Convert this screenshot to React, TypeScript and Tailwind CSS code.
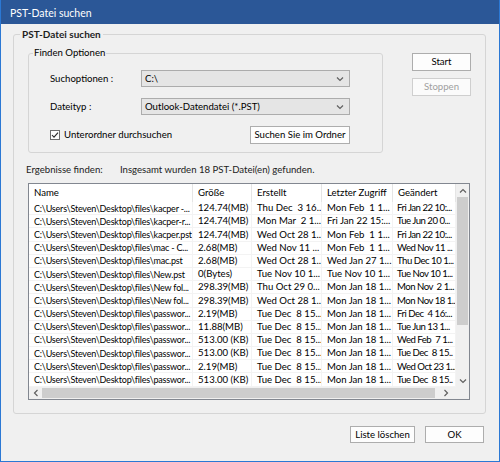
import React from 'react';

// Search results shown in the list view
const rows: string[][] = [
  ['C:\\Users\\Steven\\Desktop\\files\\kacper -...', '124.74(MB)', 'Thu Dec  3 16...', 'Mon Feb  1 1...', 'Fri Jan 22 10:...'],
  ['C:\\Users\\Steven\\Desktop\\files\\kacper-r...', '124.74(MB)', 'Mon Mar  2 1...', 'Fri Jan 22 15:...', 'Tue Jun 20 0...'],
  ['C:\\Users\\Steven\\Desktop\\files\\kacper.pst', '124.74(MB)', 'Wed Oct 28 1...', 'Mon Feb  1 1...', 'Fri Jan 22 10:...'],
  ['C:\\Users\\Steven\\Desktop\\files\\mac - C...', '2.68(MB)', 'Wed Nov 11 ...', 'Mon Feb  1 1...', 'Wed Nov 11 ...'],
  ['C:\\Users\\Steven\\Desktop\\files\\mac.pst', '2.68(MB)', 'Wed Oct 28 1...', 'Wed Jan 27 1...', 'Thu Dec 10 1...'],
  ['C:\\Users\\Steven\\Desktop\\files\\New.pst', '0(Bytes)', 'Tue Nov 10 1...', 'Tue Nov 10 1...', 'Tue Nov 10 1...'],
  ['C:\\Users\\Steven\\Desktop\\files\\New fol...', '298.39(MB)', 'Thu Oct 29 0...', 'Mon Jan 18 1...', 'Mon Nov  2 1...'],
  ['C:\\Users\\Steven\\Desktop\\files\\New fol...', '298.39(MB)', 'Wed Oct 28 1...', 'Mon Jan 18 1...', 'Mon Nov 18 1...'],
  ['C:\\Users\\Steven\\Desktop\\files\\passwor...', '2.19(MB)', 'Tue Dec  8 15...', 'Mon Jan 18 1...', 'Fri Dec  4 16:...'],
  ['C:\\Users\\Steven\\Desktop\\files\\passwor...', '11.88(MB)', 'Tue Dec  8 15...', 'Mon Jan 18 1...', 'Tue Jun 13 1...'],
  ['C:\\Users\\Steven\\Desktop\\files\\passwor...', '513.00 (KB)', 'Tue Dec  8 15...', 'Mon Jan 18 1...', 'Wed Feb  7 1...'],
  ['C:\\Users\\Steven\\Desktop\\files\\passwor...', '513.00 (KB)', 'Tue Dec  8 15...', 'Mon Jan 18 1...', 'Tue Dec  8 15..'],
  ['C:\\Users\\Steven\\Desktop\\files\\passwor...', '2.19(MB)', 'Tue Dec  8 15...', 'Mon Jan 18 1...', 'Wed Oct 23 1...'],
  ['C:\\Users\\Steven\\Desktop\\files\\passwor...', '513.00 (KB)', 'Tue Dec  8 15...', 'Mon Jan 18 1...', 'Tue Dec  8 15..'],
];

const colWidths = ['w-[164px]', 'w-[59px]', 'w-[70px]', 'w-[71px]', 'w-[63px]'];
const headers = ['Name', 'Größe', 'Erstellt', 'Letzter Zugriff', 'Geändert'];

// per-column text tweaks so the cells fit like the original list view
const cellText = [
  'pl-[5px] text-[9px] tracking-[-0.2px]',
  'pl-[5px]',
  'pl-[5px]',
  'pl-[5px]',
  'pl-[4px] tracking-[-0.5px]',
];

const Chevron: React.FC<{ dir: 'up' | 'down' | 'left' | 'right' }> = ({ dir }) => {
  const pts = {
    down: '1,1.5 4,4.5 7,1.5',
    up: '1,4.5 4,1.5 7,4.5',
    left: '4.5,1 1.5,4 4.5,7',
    right: '1.5,1 4.5,4 1.5,7',
  }[dir];
  const vertical = dir === 'up' || dir === 'down';
  return (
    <svg width={vertical ? 8 : 6} height={vertical ? 6 : 8} viewBox={vertical ? '0 0 8 6' : '0 0 6 8'}>
      <polyline points={pts} fill="none" stroke="#606060" strokeWidth="1.2" />
    </svg>
  );
};

const Select: React.FC<{ value: string }> = ({ value }) => (
  <div className="h-[17px] w-[209px] flex items-center justify-between border border-[#acacac] bg-[#e5e5e5] pl-[3px] pr-[5px]">
    <span>{value}</span>
    <Chevron dir="down" />
  </div>
);

export default function App() {
  return (
    <div className="w-[500px] h-[462px] flex flex-col bg-[#f0f0f0] border-x border-b border-[#2b78d4] font-[Lato,sans-serif] text-[9.6px] text-black leading-none select-none">
      {/* Title bar */}
      <div className="h-[24px] shrink-0 bg-[#2b5797] text-white flex items-center pl-[9px] pt-[3px] text-[10.5px]">
        PST-Datei suchen
      </div>

      <div className="flex-1 flex flex-col pt-[3px]">
        <fieldset className="ml-[12px] w-[473px] border border-[#d5d5d5] rounded-[3px] px-[14px] pb-[13px]">
          <legend className="-ml-[8px] px-[2px] font-bold text-[10px] leading-[14px] text-[#1e1e1e]">PST-Datei suchen</legend>

          <div className="flex pt-[6px]">
            {/* Search options group */}
            <fieldset className="w-[355px] border border-[#d5d5d5] rounded-[3px] pl-[21px] pb-[8px]">
              <legend className="-ml-[17px] px-[1px] leading-[12px]">Finden Optionen</legend>
              <div className="flex flex-col gap-[11px] pt-[11px]">
                <div className="flex items-center">
                  <span className="w-[91px]">Suchoptionen :</span>
                  <Select value="C:\" />
                </div>
                <div className="flex items-center">
                  <span className="w-[91px]">Dateityp :</span>
                  <Select value="Outlook-Datendatei (*.PST)" />
                </div>
                <div className="w-[300px] flex items-center justify-between">
                  <label className="flex items-center gap-[4px]">
                    <svg width="10" height="10" viewBox="0 0 10 10">
                      <rect x="0.5" y="0.5" width="9" height="9" fill="#fff" stroke="#6f6f6f" />
                      <polyline points="2,5 4,7.2 8,2.6" fill="none" stroke="#2a2a2a" strokeWidth="1.1" />
                    </svg>
                    <span>Unterordner durchsuchen</span>
                  </label>
                  <button className="h-[18px] w-[100px] border border-[#adadad] bg-[#fdfdfd]">Suchen Sie im Ordner</button>
                </div>
              </div>
            </fieldset>

            <div className="ml-[29px] mt-[6px] flex flex-col gap-[7px]">
              <button className="h-[18px] w-[59px] border border-[#adadad] bg-[#fdfdfd]">Start</button>
              <button className="h-[18px] w-[59px] border border-[#cfcfcf] bg-[#fbfbfb] text-[#a0a0a0]">Stoppen</button>
            </div>
          </div>

          {/* Results */}
          <div className="flex items-center h-[14px] mt-[10px] -ml-[2px] text-[#222]">
            <span className="w-[94px]">Ergebnisse finden:</span>
            <span>Insgesamt wurden 18 PST-Datei(en) gefunden.</span>
          </div>

          <div className="mt-[6px] w-[442px] h-[217px] border border-[#828790] bg-white flex flex-col">
            <div className="flex flex-1 min-h-0">
              <div className="flex-1 overflow-hidden">
                <div className="flex h-[18px] whitespace-nowrap">
                  {headers.map((h, i) => (
                    <div key={h} className={`${colWidths[i]} shrink-0 flex items-center pl-[5px] border-r border-[#e5e5e5]`}>
                      {h}
                    </div>
                  ))}
                </div>
                {rows.map((r, ri) => (
                  <div key={ri} className="flex h-[13.2px] whitespace-pre">
                    {r.map((c, ci) => (
                      <div
                        key={ci}
                        className={`${colWidths[ci]} shrink-0 flex items-center overflow-hidden border-r border-b border-[#f3f3f3] ${cellText[ci]}`}
                      >
                        {c}
                      </div>
                    ))}
                  </div>
                ))}
              </div>
              {/* Vertical scrollbar */}
              <div className="w-[13px] shrink-0 bg-[#f0f0f0] flex flex-col">
                <div className="h-[13px] flex items-center justify-center"><Chevron dir="up" /></div>
                <div className="h-[128px] mx-[1px] bg-[#cdcdcd]" />
                <div className="flex-1" />
                <div className="h-[13px] flex items-center justify-center"><Chevron dir="down" /></div>
              </div>
            </div>
            {/* Horizontal scrollbar */}
            <div className="h-[12px] shrink-0 flex">
              <div className="flex-1 flex bg-[#f0f0f0]">
                <div className="w-[13px] flex items-center justify-center"><Chevron dir="left" /></div>
                <div className="w-[393px] my-[1px] bg-[#cdcdcd]" />
                <div className="flex-1 flex items-center justify-center"><Chevron dir="right" /></div>
              </div>
              <div className="w-[13px] bg-[#f0f0f0]" />
            </div>
          </div>
        </fieldset>

        <div className="flex justify-end gap-[10px] mt-[12px] mr-[15px]">
          <button className="h-[17px] w-[65px] border border-[#adadad] bg-[#fdfdfd]">Liste löschen</button>
          <button className="h-[17px] w-[59px] border border-[#adadad] bg-[#fdfdfd]">OK</button>
        </div>
      </div>
    </div>
  );
}
